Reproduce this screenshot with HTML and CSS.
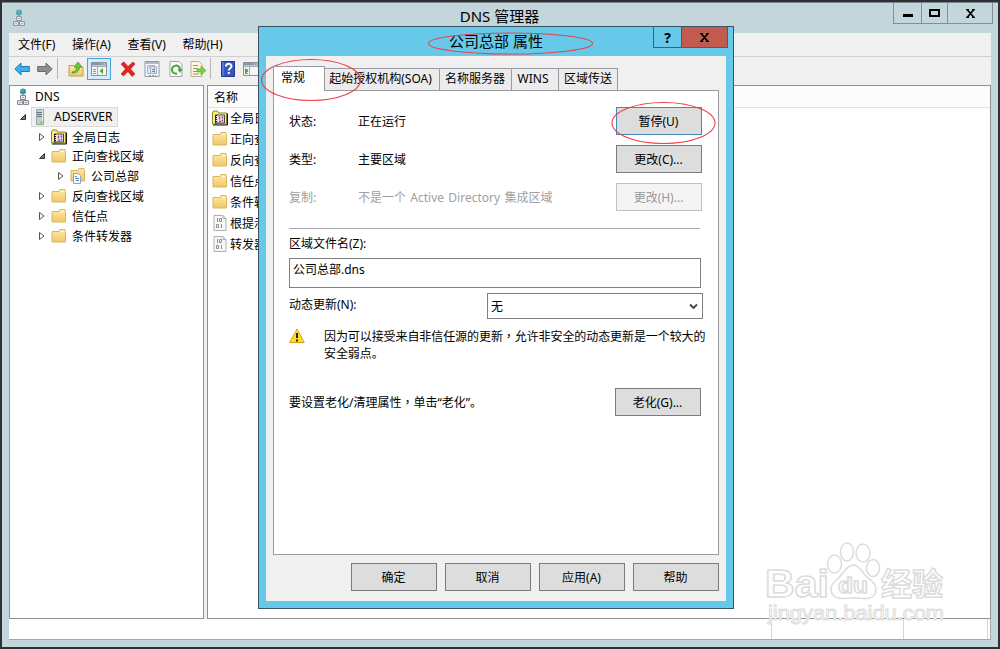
FILE: index.html
```html
<!DOCTYPE html>
<html lang="zh-CN">
<head>
    <meta charset="UTF-8">
    <title>DNS 管理器</title>
    <link rel="stylesheet" href="styles.css">
</head>
<body>
    <svg class="defs" width="0" height="0">
        <linearGradient id="gold" x1="0" y1="0" x2="0" y2="1">
            <stop offset="0" stop-color="#ffe9a6"/><stop offset="1" stop-color="#f0c668"/>
        </linearGradient>
        <symbol id="dns" viewBox="0 0 12 17">
            <circle cx="6" cy="3.5" r="3" fill="#2f8fc0"/>
            <path d="M4 2l2-1 1 2-2 1zM6 5l2-1-1 2z" fill="#58c25a"/>
            <path d="M6 6v2" stroke="#777"/>
            <path d="M3.500 7.500h5v4h-5zM.5 12.500h5v4h-5zM6.500 12.500h5v4h-5z" fill="#e4e6e8" stroke="#858b90"/>
            <path d="M5 9.500h2M2 14.500h2M8 14.500h2" stroke="#a4a8ac"/>
        </symbol>
        <symbol id="server" viewBox="0 0 10 16">
            <path d="M1.500.5h7v15h-7z" fill="#c5cdd2" stroke="#9aa5ab"/>
            <path d="M2 3.500h5M2 5.500h5M2 7.500h5" stroke="#66737b"/>
            <path d="M7.500 1v14" stroke="#e8eef0"/>
            <circle cx="6.500" cy="13.500" r="1.300" fill="#5ee02e"/>
        </symbol>
        <symbol id="folder" viewBox="0 0 16 14">
            <path d="M1 2.500h7l1-2h5v2h.5v10.500H1z" fill="url(#gold)" stroke="#ddb560"/>
            <path d="M9.500 2.500h4" stroke="#fff8dc"/>
        </symbol>
        <symbol id="zone" viewBox="0 0 16 16">
            <path d="M1 2.500h7l1-2h5v2h.5v10.500H1z" fill="url(#gold)" stroke="#ddb560"/>
            <path d="M3.500 5.500h5l2 2v8h-7z" fill="#f5f9ff" stroke="#8fa5bd"/>
            <path d="M5 8.500h2M5 10.500h4M6 12.500h3" stroke="#4f8fd0"/>
        </symbol>
        <symbol id="log" viewBox="0 0 16 15">
            <path d="M.5 2.500l1-2h4l1 2h8v11H.5z" fill="#f8ef7c" stroke="#8b8425"/>
            <path d="M15.500 3v11.500H1" stroke="#111" fill="none"/>
            <path d="M3.500 4.500h9v8h-9z" fill="#e8e8f4" stroke="#444"/>
            <path d="M4 4.500v8.500" stroke="#111" stroke-dasharray="1 1" stroke-width="2"/>
            <path d="M7.500 6v3M10.500 9v2" stroke="#e33" stroke-width="1.500"/>
            <path d="M10.500 6v2M8 10v2" stroke="#35c" stroke-width="1.500"/>
        </symbol>
        <symbol id="file" viewBox="0 0 14 16">
            <path d="M1 .5h9l3 3v12H1z" fill="#f8f8f8" stroke="#b0b0b0"/>
            <path d="M10 .5v3h3" fill="none" stroke="#b0b0b0"/>
            <path d="M4.500 3v4M6.500 3.500h2v3h-2zM3.500 9.500h2v3h-2zM8.500 9v4" fill="none" stroke="#8d8d95"/>
        </symbol>
        <symbol id="closed" viewBox="0 0 8 10">
            <path d="M1.500 1.500L6 5 1.500 8.500z" fill="#fff" stroke="#555"/>
        </symbol>
        <symbol id="open" viewBox="0 0 8 10">
            <path d="M6.500 2.500v5H1.500z" fill="#777" stroke="#333"/>
        </symbol>
        <symbol id="arrow" viewBox="0 0 16 14">
            <path d="M.8 7L7 1v3.500h8.300v5H7V13z"/>
        </symbol>
        <symbol id="panel" viewBox="0 0 16 14">
            <path d="M.5.5h15v13H.5z" fill="#f4f5f7" stroke="#8a929e"/>
            <path d="M1 2h14" stroke="#8b95a5" stroke-width="3"/>
            <path d="M11 2h1M13 2h1" stroke="#fff"/>
            <path d="M1 4.500h14M6.500 4v9" stroke="#a6adb8"/>
            <path d="M2 7.500h3M2 9.500h3M2 11.500h3" stroke="#8a96a8"/>
        </symbol>
    </svg>

    <div class="window">
        <div class="titlebar">
            <svg class="app-icon"><use href="#dns"/></svg>
            <span class="title">DNS 管理器</span>
            <div class="win-buttons">
                <span class="min"><i></i></span>
                <span class="max"><i></i></span>
                <span class="close"><svg width="9" height="9" viewBox="0 0 9 9"><path d="M0 .5h3M6 .5h3M0 8.500h3M6 8.500h3M1.500 1l6 7M7.500 1l-6 7" stroke="#000" stroke-width="1.700"/></svg></span>
            </div>
        </div>

        <div class="menubar">
            <span>文件(F)</span><span>操作(A)</span><span>查看(V)</span><span>帮助(H)</span>
        </div>

        <div class="toolbar">
            <svg class="tool back"><use href="#arrow"/></svg>
            <svg class="tool forward"><use href="#arrow"/></svg>
            <i class="split"></i>
            <svg class="tool up" viewBox="0 0 16 16">
                <path d="M1 4.500h5l1 1.500h8v9H1z" fill="url(#gold)" stroke="#c99d43"/>
                <path d="M4 11c3 0 4.500-2 4.500-5H6l4-5 4 5h-2.500c0 4-3 6-7.500 6z" fill="#6cc936" stroke="#3d9420" stroke-width=".7"/>
            </svg>
            <span class="active-tool">
                <svg width="16" height="14"><use href="#panel"/><path d="M12 6v6L8.500 9z" fill="#35b52c"/></svg>
            </span>
            <svg class="tool delete" viewBox="0 0 16 16">
                <path d="M1 3l3-2 4 4.500L13 1l2 2-4.500 5 4.500 5-3 2.500-4-5-4.500 4.500L1 13l4.500-5z" fill="#e2251f" stroke="#b31a16" stroke-width=".6"/>
            </svg>
            <svg class="tool props" viewBox="0 0 16 16">
                <path d="M1 .5h14v15H1z" fill="#f7f8fa" stroke="#929aa6"/>
                <path d="M1 2h14" stroke="#b4bbc6" stroke-width="2"/>
                <path d="M3.500 4.500h7v8h-7zM6.500 5.500h6v7h-6z" fill="#dbe9f6" stroke="#a5b5c8"/>
                <path d="M5 6.500h1M8 8.500h3M8 10.500h3" stroke="#4796ce"/>
                <path d="M5 14.500h7" stroke="#999" stroke-dasharray="2 1"/>
            </svg>
            <svg class="tool refresh" viewBox="0 0 16 16">
                <path d="M2 .5h9l3 3v12H2z" fill="#fafafa" stroke="#a6a6a6"/>
                <path d="M9 12.500a4 4 0 1 1 3-4" fill="none" stroke="#3fa83a" stroke-width="2"/>
                <path d="M9.500 8h5L12 12z" fill="#3fa83a"/>
            </svg>
            <svg class="tool export" viewBox="0 0 16 16">
                <path d="M1 .5h8l3 3v12H1z" fill="#fff6d8" stroke="#bcb191"/>
                <path d="M3 4.500h5M3 7.500h5M3 10.500h5M3 13h6" stroke="#8d93a0"/>
                <path d="M7 8h4V5l5 4.500-5 4.500v-3H7z" fill="#7bd13c" stroke="#56a728" stroke-width=".6"/>
            </svg>
            <i class="split second"></i>
            <svg class="tool help" viewBox="0 0 16 16">
                <path d="M1.500.5h13v15h-13z" fill="#3556c5" stroke="#22388b"/>
                <path d="M3 1v14" stroke="#7796e5"/>
                <path d="M6 5.500C6 2 11.500 2 11.500 5.300c0 2-2.700 2-2.700 4.200M8.800 11v2" fill="none" stroke="#fff" stroke-width="2"/>
            </svg>
            <svg class="tool panel" width="16" height="14" viewBox="0 0 16 14"><use href="#panel"/><path d="M2 6v6l3.500-3z" fill="#35b52c"/></svg>
        </div>

        <div class="panes">
            <div class="tree">
                <div class="node root"><svg class="ico-dns"><use href="#dns"/></svg>DNS</div>
                <div class="node l1"><svg class="twist"><use href="#open"/></svg><span class="selected"><svg class="ico-server"><use href="#server"/></svg>ADSERVER</span></div>
                <div class="node l2"><svg class="twist"><use href="#closed"/></svg><svg class="ico"><use href="#log"/></svg>全局日志</div>
                <div class="node l2"><svg class="twist"><use href="#open"/></svg><svg class="ico"><use href="#folder"/></svg>正向查找区域</div>
                <div class="node l3"><svg class="twist"><use href="#closed"/></svg><svg class="ico"><use href="#zone"/></svg>公司总部</div>
                <div class="node l2"><svg class="twist"><use href="#closed"/></svg><svg class="ico"><use href="#folder"/></svg>反向查找区域</div>
                <div class="node l2"><svg class="twist"><use href="#closed"/></svg><svg class="ico"><use href="#folder"/></svg>信任点</div>
                <div class="node l2"><svg class="twist"><use href="#closed"/></svg><svg class="ico"><use href="#folder"/></svg>条件转发器</div>
            </div>
            <div class="list">
                <div class="list-head">名称</div>
                <div class="item"><svg class="ico"><use href="#log"/></svg>全局日</div>
                <div class="item"><svg class="ico"><use href="#folder"/></svg>正向查</div>
                <div class="item"><svg class="ico"><use href="#folder"/></svg>反向查</div>
                <div class="item"><svg class="ico"><use href="#folder"/></svg>信任点</div>
                <div class="item"><svg class="ico"><use href="#folder"/></svg>条件转</div>
                <div class="item"><svg class="ico"><use href="#file"/></svg>根提示</div>
                <div class="item"><svg class="ico"><use href="#file"/></svg>转发器</div>
            </div>
        </div>
        <div class="statusbar"><span></span><span></span><span></span></div>
    </div>

    <div class="dialog">
        <div class="dialog-title">
            <span class="dialog-name">公司总部 属性</span>
            <div class="dialog-buttons">
                <span class="question">?</span>
                <span class="dialog-close"><svg width="9" height="9" viewBox="0 0 9 9"><path d="M0 .5h3M6 .5h3M0 8.500h3M6 8.500h3M1.500 1l6 7M7.500 1l-6 7" stroke="#000" stroke-width="1.700"/></svg></span>
            </div>
        </div>
        <div class="dialog-body">
            <div class="tabs">
                <span class="tab current">常规</span>
                <span class="tab soa">起始授权机构(SOA)</span>
                <span class="tab ns">名称服务器</span>
                <span class="tab wins">WINS</span>
                <span class="tab transfer">区域传送</span>
            </div>
            <div class="sheet">
                <div class="row"><label>状态:</label><span>正在运行</span><button class="btn focus">暂停(U)</button></div>
                <div class="row"><label>类型:</label><span>主要区域</span><button class="btn">更改(C)...</button></div>
                <div class="row off"><label>复制:</label><span>不是一个 Active Directory 集成区域</span><button class="btn" disabled>更改(H)...</button></div>
                <div class="rule"></div>
                <div class="file-label">区域文件名(Z):</div>
                <div class="field">公司总部.dns</div>
                <div class="update">
                    <label>动态更新(N):</label>
                    <div class="select">无<svg width="9" height="7" viewBox="0 0 9 7"><path d="M1 1.500l3.500 3.500L8 1.500" fill="none" stroke="#444" stroke-width="1.800"/></svg></div>
                </div>
                <div class="warning">
                    <svg width="16" height="16" viewBox="0 0 16 16">
                        <path d="M8 1l7.300 13.500H.7z" fill="#ffdf22" stroke="#d3a51b" stroke-linejoin="round"/>
                        <path d="M8 5v5M8 11.500v2" stroke="#222" stroke-width="2"/>
                    </svg>
                    <p>因为可以接受来自非信任源的更新<span class="comma" lang="zh-TW">，</span>允许非安全的动态更新是一个较大的<br>安全弱点。</p>
                </div>
                <div class="aging"><span>要设置老化/清理属性<span class="comma" lang="zh-TW">，</span>单击“老化”。</span><button class="btn">老化(G)...</button></div>
            </div>
            <div class="actions">
                <button class="btn">确定</button>
                <button class="btn">取消</button>
                <button class="btn">应用(A)</button>
                <button class="btn">帮助</button>
            </div>
        </div>
    </div>

    <svg class="marks" width="1000" height="649">
        <g fill="none" stroke="#ee4048" stroke-width="1.100">
            <ellipse cx="510.500" cy="43.500" rx="82" ry="10.500"/>
            <ellipse cx="311" cy="80" rx="49.500" ry="20.500"/>
            <ellipse cx="663.500" cy="123" rx="51.500" ry="20.500"/>
        </g>
        <g class="watermark">
            <text x="765" y="597" font-size="38" textLength="64" lengthAdjust="spacingAndGlyphs">Bai</text>
            <ellipse cx="834.500" cy="564" rx="7" ry="9"/>
            <ellipse cx="847" cy="552" rx="6.500" ry="9"/>
            <ellipse cx="863" cy="553" rx="7" ry="9"/>
            <ellipse cx="873" cy="568" rx="6.500" ry="8.500"/>
            <path d="M831 589c0-7 7-9 11-15s7-9 12-9c5 1 7 5 11 10s11 7 11 14c0 11-10 10-22 9-12 1-23 2-23-9z"/>
            <text class="du" x="838" y="593" font-size="22" textLength="30" lengthAdjust="spacingAndGlyphs">du</text>
            <text class="cn" x="881" y="595" font-size="31">经验</text>
            <text class="url" x="768" y="620" font-size="20" textLength="176" lengthAdjust="spacingAndGlyphs">jingyan.baidu.com</text>
        </g>
    </svg>
</body>
</html>
```
FILE: styles.css
```css
* {
    box-sizing: border-box;
}
body {
    margin: 0;
    height: 649px;
    padding: 2px;
    background: #303030;
    font-family: "Noto Sans", "Noto Sans CJK SC", sans-serif;
    font-size: 12px;
    color: #000;
    overflow: hidden;
    white-space: nowrap;
}
.defs {
    position: absolute;
}
.window {
    width: 996px;
    height: 645px;
    display: flex;
    flex-direction: column;
    padding: 0 7px 7px;
    background: #c3d6dc;
    border-top: 1px solid #74858b;
}
.titlebar {
    height: 30px;
    display: flex;
    justify-content: space-between;
    padding-left: 4px;
    flex-shrink: 0;
}
.app-icon {
    width: 12px;
    height: 17px;
    margin-top: 6px;
    opacity: 0.8;
}
.title {
    font-size: 15px;
    line-height: 27px;
    margin-left: 81px;
}
.win-buttons {
    display: flex;
    height: 21px;
    margin-right: -2px;
    border: 1px solid #7f9098;
    border-top: 0;
}
.win-buttons span {
    display: flex;
    justify-content: center;
    align-items: center;
    width: 27px;
}
.win-buttons .max {
    border: solid #7f9098;
    border-width: 0 1px;
}
.win-buttons .close {
    width: 44px;
}
.min i {
    width: 10px;
    height: 3px;
    margin-top: 4px;
    background: #000;
}
.max i {
    width: 11px;
    height: 8px;
    border: 2px solid #000;
}
.menubar {
    height: 23px;
    display: flex;
    flex-shrink: 0;
    gap: 16.600px;
    padding-left: 9px;
    line-height: 23px;
    background: #f0f0f0;
}
.toolbar {
    height: 29px;
    display: flex;
    flex-shrink: 0;
    align-items: center;
    padding: 0 0 5px 5px;
    background: #f0f0f0;
    border-top: 1px solid #cfcfcf;
}
.tool {
    width: 16px;
    height: 16px;
    flex-shrink: 0;
}
.back {
    fill: #3fb0ee;
    stroke: #2379b5;
    height: 14px;
}
.forward {
    fill: #8d8d8d;
    stroke: #6d6d6d;
    margin-left: 7px;
    height: 14px;
    transform: scaleX(-1);
}
.split {
    width: 1px;
    height: 21px;
    margin: 0 10px 0 4px;
    background: #b6b6b6;
}
.active-tool {
    width: 24px;
    height: 22px;
    display: flex;
    justify-content: center;
    align-items: center;
    margin: 0 9px 0 3px;
    background: #d5eafa;
    border: 1px solid #4ba3dc;
}
.props, .refresh {
    margin-left: 8px;
}
.export {
    margin-left: 6px;
}
.split.second {
    margin-right: 9px;
}
.panel {
    height: 14px;
    margin-left: 7px;
}
.panes {
    flex: 1;
    display: flex;
    gap: 3px;
    background: #f0f0f0;
}
.tree {
    width: 195px;
    padding-top: 1px;
    background: #fff;
    border: 1px solid #8d9299;
}
.list {
    flex: 1;
    background: #fff;
    border: 1px solid #8d9299;
    overflow: hidden;
}
.node {
    height: 19.850px;
    display: flex;
    align-items: center;
}
.root {
    padding-left: 7px;
}
.l1 {
    padding-left: 9px;
}
.l2 {
    padding-left: 28px;
}
.l3 {
    padding-left: 47px;
}
.twist {
    width: 8px;
    height: 10px;
}
.ico {
    width: 16px;
    height: 16px;
    margin: 0 5px 0 5px;
}
.ico-dns {
    width: 12px;
    height: 17px;
    margin-right: 6px;
}
.ico-server {
    width: 10px;
    height: 16px;
    margin-right: 9px;
}
.selected {
    display: flex;
    align-items: center;
    height: 20px;
    margin-left: 4px;
    padding: 0 4px 0 3px;
    background: #f0f0f0;
    border: 1px solid #d9d9d9;
}
.list-head {
    height: 22px;
    padding-left: 6px;
    line-height: 23px;
    background: #fcfcfc;
    border-bottom: 1px solid #e2e2e2;
}
.item {
    height: 20.900px;
    display: flex;
    align-items: center;
}
.item .ico {
    margin: 0 2px 0 4px;
}
.statusbar {
    height: 21px;
    display: flex;
    justify-content: flex-end;
    padding-right: 2px;
    background: #fff;
    border: 1px solid #a3a8ab;
    border-width: 0 1px 1px 0;
}
.statusbar span {
    border-right: 1px solid #d5d5d5;
}
.statusbar span:nth-child(2) {
    width: 132px;
}
.statusbar span:nth-child(3) {
    width: 84px;
}

.dialog {
    position: absolute;
    left: 258px;
    top: 26px;
    width: 476px;
    height: 583px;
    padding: 0 7px 7px;
    background: #66c9e9;
    border: 1px solid #3c5563;
}
.dialog-title {
    height: 29px;
    display: flex;
    justify-content: space-between;
}
.dialog-name {
    margin-left: 183px;
    font-size: 15px;
    line-height: 29px;
}
.dialog-buttons {
    display: flex;
    height: 21px;
    margin-right: -2px;
    border: 1px solid #43606d;
    border-top: 0;
}
.dialog-buttons span {
    display: flex;
    justify-content: center;
    align-items: center;
}
.question {
    width: 27px;
    font-size: 14px;
    font-weight: bold;
}
.dialog-close {
    width: 46px;
    background: #c35a50;
    border-left: 1px solid #6b4a4a;
}
.dialog-body {
    height: 545px;
    padding: 10px 7px 0;
    background: #f0f0f0;
}
.tabs {
    height: 24px;
    display: flex;
    align-items: flex-end;
}
.tab {
    height: 22px;
    line-height: 20px;
    text-align: center;
    background: #ececec;
    border: 1px solid #9a9aa2;
    border-left: 0;
    border-bottom: 0;
}
.tab.current {
    width: 52px;
    height: 25px;
    padding-left: 7px;
    line-height: 21px;
    text-align: left;
    background: #fff;
    border-left: 1px solid #9a9aa2;
    margin-bottom: -1px;
    z-index: 1;
}
.soa {
    width: 115px;
    padding-right: 3px;
}
.ns {
    width: 72px;
    padding-right: 1px;
}
.wins {
    width: 47px;
    padding-right: 4px;
}
.transfer {
    width: 59px;
}
.sheet {
    height: 465px;
    padding: 16px 15px 0;
    background: #fff;
    border: 1px solid #9a9aa2;
}
.row {
    display: flex;
    align-items: center;
    height: 28px;
    margin-bottom: 10px;
}
.row label {
    width: 69px;
}
.row .btn {
    margin-left: auto;
    margin-right: 1px;
}
.row span {
    word-spacing: 1.200px;
}
.off {
    color: #a0a0a0;
}
.btn {
    width: 86px;
    height: 28px;
    padding: 0 1px 1px 0;
    font: inherit;
    color: #000;
    background: #ddd;
    border: 1px solid #7b7b7b;
}
.btn.focus {
    border-color: #4788b7;
}
.btn:disabled {
    color: #999;
    background: #f4f4f4;
    border-color: #bfc2c5;
}
.rule {
    width: 411px;
    height: 1px;
    margin-top: 17px;
    background: #a8a8a8;
}
.file-label {
    height: 29px;
    line-height: 29px;
}
.field {
    width: 412px;
    height: 30px;
    padding-left: 3px;
    line-height: 21px;
    border: 1px solid #808080;
}
.update {
    display: flex;
    justify-content: space-between;
    height: 26px;
    margin-top: 5px;
    line-height: 23px;
}
.select {
    display: flex;
    justify-content: space-between;
    align-items: center;
    width: 216px;
    padding: 1px 4px 0 3px;
    border: 1px solid #808080;
}
.warning {
    display: flex;
    gap: 19px;
    margin-top: 9px;
}
.warning svg {
    flex-shrink: 0;
}
.warning p {
    margin: 0;
    line-height: 17px;
    letter-spacing: -0.080px;
}
.comma {
    font-family: "Noto Sans CJK TC", sans-serif;
    line-height: 1;
}
.aging {
    display: flex;
    justify-content: space-between;
    align-items: center;
    margin-top: 26px;
    padding-right: 2px;
}
.actions {
    display: flex;
    justify-content: flex-end;
    gap: 8px;
    margin-top: 8px;
}

.marks {
    position: absolute;
    left: 0;
    top: 0;
}
.watermark {
    fill: #fff;
    stroke: #dcdcdc;
    stroke-width: 1.500px;
    font-family: "Liberation Sans", sans-serif;
    font-weight: bold;
}
.watermark .cn {
    font-family: "Noto Sans CJK SC", sans-serif;
}
.watermark .url {
    font-weight: normal;
    stroke-width: 1px;
}
```
